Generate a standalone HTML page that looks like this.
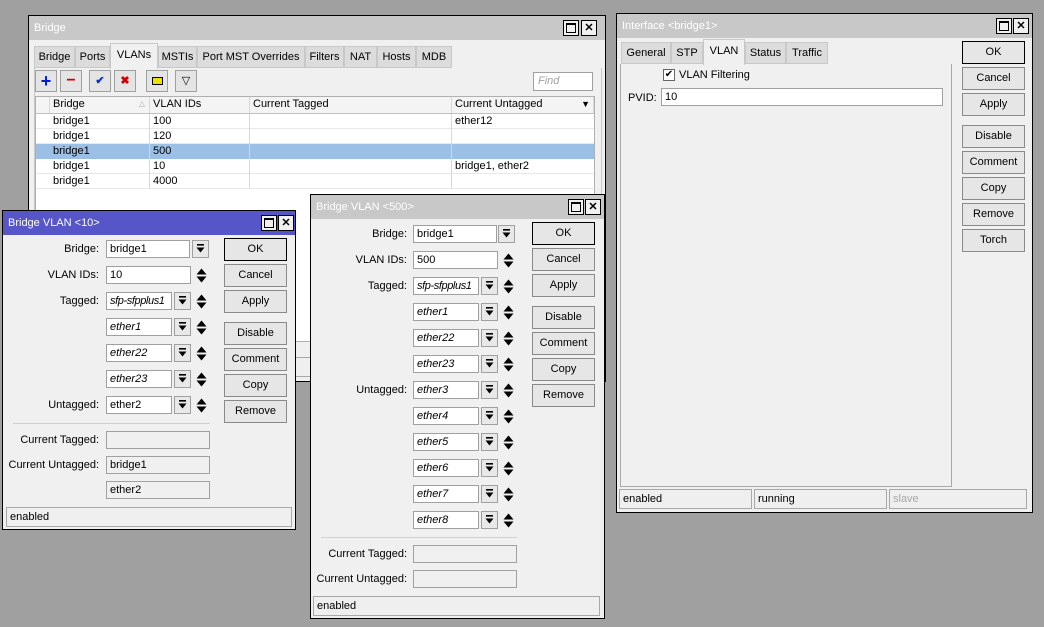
<!DOCTYPE html>
<html><head><meta charset="utf-8"><style>
*{box-sizing:border-box;margin:0;padding:0}
body{width:1044px;height:627px;background:#a0a0a0;font-family:"Liberation Sans",sans-serif;font-size:11px;color:#000;position:relative;overflow:hidden}
div,span{position:absolute;white-space:nowrap}
svg{display:block}
.win{background:#f0f0f0;border:1px solid #000}
.tb{left:0;right:0;top:0;height:24px;background:#c8c8c8;color:#fff;padding:6px 0 0 5px;font-size:11px}
.tb.act{background:#5656c8}
.wb{width:16px;height:16px;border:1px solid #000;background:#f0f0f0;top:4px}
.wb i{position:absolute;left:2px;top:2px;width:10px;height:10px;border:1px solid #000;border-top-width:2px}
.wb b{position:absolute;left:0;top:0;width:14px;height:14px;text-align:center;font-size:11px;line-height:14px}
.lbl{text-align:right;height:18px;line-height:18px}
.f{background:#fff;border:1px solid #a0a0a0;height:18px;line-height:16px;padding-left:3px}
.f.it{font-style:italic}
.f.ro{background:#f0f0f0}
.dd{width:17px;height:18px;border:1px solid #a0a0a0;background:#e8e8e8}
.dd svg{position:absolute;left:3px;top:3px}
.sp{width:11px;height:18px}
.sp svg{position:absolute;left:0;top:2px}
.btn{width:63px;height:23px;border:1px solid #8a8a8a;background:#e6e6e6;text-align:center;line-height:21px}
.btn.ok{border:1px solid #000}
.sb{height:20px;border:1px solid #a8a8a8;background:#efefef;line-height:18px;padding-left:3px}
.tab{top:0;height:22px;border:1px solid #c8c8c8;background:#dcdcdc;line-height:20px;text-align:center}
.tab.sel{background:#f0f0f0;border-bottom:none;top:-3px;height:26px;line-height:22px}
.cell{height:15px;line-height:14px;padding-left:3px;border-right:1px solid #d8d8d8}
.tbtn{top:0;width:22px;height:22px;border:1px solid #a0a0a0;background:#e4e4e4;text-align:center;line-height:20px;font-weight:bold}
</style></head><body>
<svg width="0" height="0" style="position:absolute"><defs>
<symbol id="dd" viewBox="0 0 9 10"><rect x="1" y="0" width="7" height="1.6"/><path d="M0.5 3.5h8L4.5 8.5z"/></symbol>
<symbol id="sp" viewBox="0 0 11 15"><path d="M0.5 6.5h10L5.5 0.5zM0.5 8.5h10L5.5 14.5z"/></symbol>
</defs></svg>

<!-- Bridge window -->
<div class="win" style="left:28px;top:15px;width:578px;height:367px">
 <div class="tb">Bridge</div>
 <div class="wb" style="left:534px"><i></i></div>
 <div class="wb" style="left:552px"><b>✕</b></div>
 <div style="left:5px;top:30px;width:570px;height:22px">
  <div class="tab" style="left:0;width:41px">Bridge</div>
  <div class="tab" style="left:41px;width:35px">Ports</div>
  <div class="tab sel" style="left:76px;width:48px">VLANs</div>
  <div class="tab" style="left:124px;width:39px">MSTIs</div>
  <div class="tab" style="left:163px;width:108px">Port MST Overrides</div>
  <div class="tab" style="left:271px;width:39px">Filters</div>
  <div class="tab" style="left:310px;width:33px">NAT</div>
  <div class="tab" style="left:343px;width:39px">Hosts</div>
  <div class="tab" style="left:382px;width:36px">MDB</div>
 </div>
 <div style="left:5px;top:52px;width:568px;height:290px;border-left:1px solid #c8c8c8;border-right:1px solid #c8c8c8"></div>
 <div style="left:6px;top:54px;width:560px;height:22px">
  <div class="tbtn" style="left:0;color:#0020d0;font-size:18px">+</div>
  <div class="tbtn" style="left:25px;color:#d00000;font-size:16px">−</div>
  <div class="tbtn" style="left:54px;color:#1030c0">✔</div>
  <div class="tbtn" style="left:79px;color:#d00000">✖</div>
  <div class="tbtn" style="left:111px"><span style="left:5px;top:6px;width:11px;height:8px;background:#f0e000;border:1px solid #000"></span></div>
  <div class="tbtn" style="left:140px;font-weight:normal">▽</div>
  <div style="left:498px;top:2px;width:60px;height:19px;border:1px solid #a0a0a0;background:#fff;color:#a0a0a0;font-style:italic;padding:2px 0 0 4px">Find</div>
 </div>
 <div style="left:6px;top:80px;width:560px;height:246px;background:#fff;border:1px solid #b0b0b0">
  <div style="left:0;top:0;width:558px;height:17px;background:#f4f4f4;border-bottom:1px solid #c0c0c0">
   <div class="cell" style="left:0;width:14px;height:16px"></div>
   <div class="cell" style="left:14px;width:100px;height:16px">Bridge<span style="right:4px;top:0;color:#aaa;font-size:8px">△</span></div>
   <div class="cell" style="left:114px;width:100px;height:16px">VLAN IDs</div>
   <div class="cell" style="left:214px;width:202px;height:16px">Current Tagged</div>
   <div class="cell" style="left:416px;width:142px;height:16px">Current Untagged<span style="right:3px;top:0;font-size:9px">▼</span></div>
  </div>
  <div style="left:0;top:17px;width:558px;height:15px;border-bottom:1px solid #e8e8e8"><div class="cell" style="left:14px;width:100px">bridge1</div><div class="cell" style="left:114px;width:100px">100</div><div class="cell" style="left:214px;width:202px"></div><div class="cell" style="left:416px;width:142px;border:none">ether12</div></div>
  <div style="left:0;top:32px;width:558px;height:15px;border-bottom:1px solid #e8e8e8"><div class="cell" style="left:14px;width:100px">bridge1</div><div class="cell" style="left:114px;width:100px">120</div><div class="cell" style="left:214px;width:202px"></div></div>
  <div style="left:0;top:47px;width:558px;height:15px;background:#9cbfe6"><div class="cell" style="left:14px;width:100px">bridge1</div><div class="cell" style="left:114px;width:100px">500</div><div class="cell" style="left:214px;width:202px"></div></div>
  <div style="left:0;top:62px;width:558px;height:15px;border-bottom:1px solid #e8e8e8"><div class="cell" style="left:14px;width:100px">bridge1</div><div class="cell" style="left:114px;width:100px">10</div><div class="cell" style="left:214px;width:202px"></div><div class="cell" style="left:416px;width:142px;border:none">bridge1, ether2</div></div>
  <div style="left:0;top:77px;width:558px;height:15px;border-bottom:1px solid #e8e8e8"><div class="cell" style="left:14px;width:100px">bridge1</div><div class="cell" style="left:114px;width:100px">4000</div><div class="cell" style="left:214px;width:202px"></div></div>
 </div>
 <div class="sb" style="left:5px;top:341px;width:566px"></div>
</div>

<!-- Bridge VLAN <10> -->
<div class="win" style="left:2px;top:210px;width:294px;height:320px">
 <div class="tb act">Bridge VLAN &lt;10&gt;</div>
 <div class="wb" style="left:258px"><i></i></div>
 <div class="wb" style="left:275px"><b>✕</b></div>
 <div class="lbl" style="left:0;top:29px;width:96px">Bridge:</div>
 <div class="f" style="left:103px;top:29px;width:84px">bridge1</div><div class="dd" style="left:189px;top:29px"><svg width="9" height="10"><use href="#dd"/></svg></div>
 <div class="lbl" style="left:0;top:55px;width:96px">VLAN IDs:</div>
 <div class="f" style="left:103px;top:55px;width:85px">10</div><div class="sp" style="left:193px;top:55px"><svg width="11" height="15"><use href="#sp"/></svg></div>
 <div class="lbl" style="left:0;top:81px;width:96px">Tagged:</div>
 <div class="f it" style="left:103px;top:81px;width:66px;letter-spacing:-0.4px">sfp-sfpplus1</div><div class="dd" style="left:171px;top:81px"><svg width="9" height="10"><use href="#dd"/></svg></div><div class="sp" style="left:193px;top:81px"><svg width="11" height="15"><use href="#sp"/></svg></div>
 <div class="f it" style="left:103px;top:107px;width:66px">ether1</div><div class="dd" style="left:171px;top:107px"><svg width="9" height="10"><use href="#dd"/></svg></div><div class="sp" style="left:193px;top:107px"><svg width="11" height="15"><use href="#sp"/></svg></div>
 <div class="f it" style="left:103px;top:133px;width:66px">ether22</div><div class="dd" style="left:171px;top:133px"><svg width="9" height="10"><use href="#dd"/></svg></div><div class="sp" style="left:193px;top:133px"><svg width="11" height="15"><use href="#sp"/></svg></div>
 <div class="f it" style="left:103px;top:159px;width:66px">ether23</div><div class="dd" style="left:171px;top:159px"><svg width="9" height="10"><use href="#dd"/></svg></div><div class="sp" style="left:193px;top:159px"><svg width="11" height="15"><use href="#sp"/></svg></div>
 <div class="lbl" style="left:0;top:185px;width:96px">Untagged:</div>
 <div class="f" style="left:103px;top:185px;width:66px">ether2</div><div class="dd" style="left:171px;top:185px"><svg width="9" height="10"><use href="#dd"/></svg></div><div class="sp" style="left:193px;top:185px"><svg width="11" height="15"><use href="#sp"/></svg></div>
 <div style="left:10px;top:212px;width:197px;height:1px;background:#d0d0d0"></div>
 <div class="lbl" style="left:0;top:220px;width:96px">Current Tagged:</div>
 <div class="f ro" style="left:103px;top:220px;width:104px"></div>
 <div class="lbl" style="left:0;top:245px;width:96px">Current Untagged:</div>
 <div class="f ro" style="left:103px;top:245px;width:104px">bridge1</div>
 <div class="f ro" style="left:103px;top:270px;width:104px">ether2</div>
 <div class="btn ok" style="left:221px;top:27px">OK</div>
 <div class="btn" style="left:221px;top:53px">Cancel</div>
 <div class="btn" style="left:221px;top:79px">Apply</div>
 <div class="btn" style="left:221px;top:111px">Disable</div>
 <div class="btn" style="left:221px;top:137px">Comment</div>
 <div class="btn" style="left:221px;top:163px">Copy</div>
 <div class="btn" style="left:221px;top:189px">Remove</div>
 <div class="sb" style="left:3px;top:296px;width:286px">enabled</div>
</div>

<!-- Bridge VLAN <500> -->
<div class="win" style="left:310px;top:194px;width:295px;height:425px">
 <div class="tb">Bridge VLAN &lt;500&gt;</div>
 <div class="wb" style="left:257px"><i></i></div>
 <div class="wb" style="left:274px"><b>✕</b></div>
 <div class="lbl" style="left:0;top:30px;width:96px">Bridge:</div>
 <div class="f" style="left:102px;top:30px;width:84px">bridge1</div><div class="dd" style="left:187px;top:30px"><svg width="9" height="10"><use href="#dd"/></svg></div>
 <div class="lbl" style="left:0;top:56px;width:96px">VLAN IDs:</div>
 <div class="f" style="left:102px;top:56px;width:85px">500</div><div class="sp" style="left:192px;top:56px"><svg width="11" height="15"><use href="#sp"/></svg></div>
 <div class="lbl" style="left:0;top:82px;width:96px">Tagged:</div>
 <div class="f it" style="left:102px;top:82px;width:66px;letter-spacing:-0.4px">sfp-sfpplus1</div><div class="dd" style="left:170px;top:82px"><svg width="9" height="10"><use href="#dd"/></svg></div><div class="sp" style="left:192px;top:82px"><svg width="11" height="15"><use href="#sp"/></svg></div>
 <div class="f it" style="left:102px;top:108px;width:66px">ether1</div><div class="dd" style="left:170px;top:108px"><svg width="9" height="10"><use href="#dd"/></svg></div><div class="sp" style="left:192px;top:108px"><svg width="11" height="15"><use href="#sp"/></svg></div>
 <div class="f it" style="left:102px;top:134px;width:66px">ether22</div><div class="dd" style="left:170px;top:134px"><svg width="9" height="10"><use href="#dd"/></svg></div><div class="sp" style="left:192px;top:134px"><svg width="11" height="15"><use href="#sp"/></svg></div>
 <div class="f it" style="left:102px;top:160px;width:66px">ether23</div><div class="dd" style="left:170px;top:160px"><svg width="9" height="10"><use href="#dd"/></svg></div><div class="sp" style="left:192px;top:160px"><svg width="11" height="15"><use href="#sp"/></svg></div>
 <div class="lbl" style="left:0;top:186px;width:96px">Untagged:</div>
 <div class="f it" style="left:102px;top:186px;width:66px">ether3</div><div class="dd" style="left:170px;top:186px"><svg width="9" height="10"><use href="#dd"/></svg></div><div class="sp" style="left:192px;top:186px"><svg width="11" height="15"><use href="#sp"/></svg></div>
 <div class="f it" style="left:102px;top:212px;width:66px">ether4</div><div class="dd" style="left:170px;top:212px"><svg width="9" height="10"><use href="#dd"/></svg></div><div class="sp" style="left:192px;top:212px"><svg width="11" height="15"><use href="#sp"/></svg></div>
 <div class="f it" style="left:102px;top:238px;width:66px">ether5</div><div class="dd" style="left:170px;top:238px"><svg width="9" height="10"><use href="#dd"/></svg></div><div class="sp" style="left:192px;top:238px"><svg width="11" height="15"><use href="#sp"/></svg></div>
 <div class="f it" style="left:102px;top:264px;width:66px">ether6</div><div class="dd" style="left:170px;top:264px"><svg width="9" height="10"><use href="#dd"/></svg></div><div class="sp" style="left:192px;top:264px"><svg width="11" height="15"><use href="#sp"/></svg></div>
 <div class="f it" style="left:102px;top:290px;width:66px">ether7</div><div class="dd" style="left:170px;top:290px"><svg width="9" height="10"><use href="#dd"/></svg></div><div class="sp" style="left:192px;top:290px"><svg width="11" height="15"><use href="#sp"/></svg></div>
 <div class="f it" style="left:102px;top:316px;width:66px">ether8</div><div class="dd" style="left:170px;top:316px"><svg width="9" height="10"><use href="#dd"/></svg></div><div class="sp" style="left:192px;top:316px"><svg width="11" height="15"><use href="#sp"/></svg></div>
 <div style="left:10px;top:342px;width:196px;height:1px;background:#d0d0d0"></div>
 <div class="lbl" style="left:0;top:350px;width:96px">Current Tagged:</div>
 <div class="f ro" style="left:102px;top:350px;width:104px"></div>
 <div class="lbl" style="left:0;top:375px;width:96px">Current Untagged:</div>
 <div class="f ro" style="left:102px;top:375px;width:104px"></div>
 <div class="btn ok" style="left:221px;top:27px">OK</div>
 <div class="btn" style="left:221px;top:53px">Cancel</div>
 <div class="btn" style="left:221px;top:79px">Apply</div>
 <div class="btn" style="left:221px;top:111px">Disable</div>
 <div class="btn" style="left:221px;top:137px">Comment</div>
 <div class="btn" style="left:221px;top:163px">Copy</div>
 <div class="btn" style="left:221px;top:189px">Remove</div>
 <div class="sb" style="left:2px;top:401px;width:287px">enabled</div>
</div>

<!-- Interface window -->
<div class="win" style="left:616px;top:13px;width:417px;height:500px">
 <div class="tb">Interface &lt;bridge1&gt;</div>
 <div class="wb" style="left:379px"><i></i></div>
 <div class="wb" style="left:396px"><b>✕</b></div>
 <div style="left:4px;top:28px;width:330px;height:22px">
  <div class="tab" style="left:0;width:50px">General</div>
  <div class="tab" style="left:50px;width:32px">STP</div>
  <div class="tab sel" style="left:82px;width:42px">VLAN</div>
  <div class="tab" style="left:124px;width:41px">Status</div>
  <div class="tab" style="left:165px;width:42px">Traffic</div>
 </div>
 <div style="left:3px;top:50px;width:332px;height:423px;border:1px solid #a8a8a8;border-top:none"></div>
 <div style="left:46px;top:55px;width:12px;height:12px;border:1px solid #666;background:#fff;font-size:10px;line-height:10px;text-align:center">✔</div>
 <div style="left:62px;top:55px">VLAN Filtering</div>
 <div style="left:11px;top:78px">PVID:</div>
 <div class="f" style="left:44px;top:74px;width:282px;height:18px">10</div>
 <div class="btn ok" style="left:345px;top:27px">OK</div>
 <div class="btn" style="left:345px;top:53px">Cancel</div>
 <div class="btn" style="left:345px;top:79px">Apply</div>
 <div class="btn" style="left:345px;top:111px">Disable</div>
 <div class="btn" style="left:345px;top:137px">Comment</div>
 <div class="btn" style="left:345px;top:163px">Copy</div>
 <div class="btn" style="left:345px;top:189px">Remove</div>
 <div class="btn" style="left:345px;top:215px">Torch</div>
 <div class="sb" style="left:2px;top:475px;width:133px">enabled</div>
 <div class="sb" style="left:137px;top:475px;width:133px">running</div>
 <div class="sb" style="left:272px;top:475px;width:138px;color:#a8a8a8">slave</div>
</div>
</body></html>
